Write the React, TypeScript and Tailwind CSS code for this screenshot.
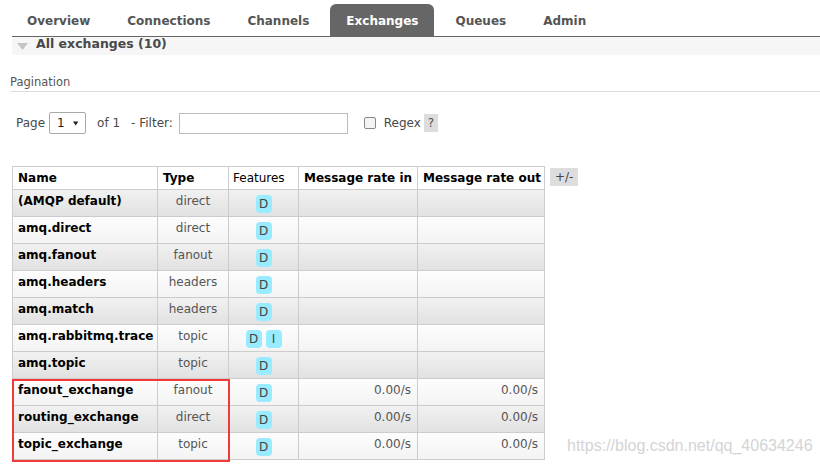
import React from 'react';

type Exchange = {
  name: string;
  type: string;
  features: string[];
  rateIn?: string;
  rateOut?: string;
};

const exchanges: Exchange[] = [
  { name: '(AMQP default)', type: 'direct', features: ['D'] },
  { name: 'amq.direct', type: 'direct', features: ['D'] },
  { name: 'amq.fanout', type: 'fanout', features: ['D'] },
  { name: 'amq.headers', type: 'headers', features: ['D'] },
  { name: 'amq.match', type: 'headers', features: ['D'] },
  { name: 'amq.rabbitmq.trace', type: 'topic', features: ['D', 'I'] },
  { name: 'amq.topic', type: 'topic', features: ['D'] },
  { name: 'fanout_exchange', type: 'fanout', features: ['D'], rateIn: '0.00/s', rateOut: '0.00/s' },
  { name: 'routing_exchange', type: 'direct', features: ['D'], rateIn: '0.00/s', rateOut: '0.00/s' },
  { name: 'topic_exchange', type: 'topic', features: ['D'], rateIn: '0.00/s', rateOut: '0.00/s' },
];

const tabs = ['Overview', 'Connections', 'Channels', 'Exchanges', 'Queues', 'Admin'];

const App: React.FC = () => {
  return (
    <div className="relative w-[820px] h-[469px] overflow-hidden bg-white text-[12px] text-[#484848] font-['DejaVu_Sans',Verdana,sans-serif]">
      {/* tabs */}
      <div className="ml-[12px] mt-[5px] h-[32px] flex items-end gap-[5px] border-b border-[#666]">
        {tabs.map((t, i) => (
          <div
            key={t}
            className={`h-[32px] px-[16px] pt-[1px] flex items-center font-bold text-[12px] rounded-t-[6px] ${
              i === 0 ? '-ml-[1px]' : ''
            } ${t === 'Exchanges' ? 'bg-[#666] text-white' : 'text-[#555]'}`}
          >
            {t}
          </div>
        ))}
      </div>

      {/* section header */}
      <div className="ml-[12px] h-[18px] bg-[#f6f6f6] flex items-center">
        <svg width="11" height="7" viewBox="0 0 11 7" className="ml-[5px] mt-[1px]">
          <path d="M0 0 H11 L5.5 7 Z" fill="#c4c4c4" />
        </svg>
        <span className="ml-[8px] font-bold text-[12.5px] text-[#484848] -mt-[4px]">All exchanges (10)</span>
      </div>

      {/* pagination */}
      <div className="ml-[10px] mt-[19px] pb-0 border-b border-[#ddd] text-[11.5px] text-[#555]">Pagination</div>

      <div className="ml-[16px] mt-[20px] flex items-center text-[12px] text-[#484848]">
        <span>Page</span>
        <div className="ml-[4px] w-[37px] h-[22px] border border-[#a9a9a9] rounded-[2px] flex items-center px-[7px] text-[#222]">
          <span>1</span>
          <svg width="7" height="5" viewBox="0 0 7 5" className="ml-[8px]">
            <path d="M0 0 H7 L3.5 5 Z" fill="#222" />
          </svg>
        </div>
        <span className="ml-[11px]">of 1</span>
        <span className="ml-[11px]">- Filter:</span>
        <div className="ml-[6px] w-[169px] h-[21px] border border-[#bbb]" />
        <div className="ml-[16px] w-[12px] h-[12px] border border-[#888] rounded-[2px] bg-[#f4f4f4]" />
        <span className="ml-[8px]">Regex</span>
        <span className="ml-[3px] px-[4px] h-[18px] flex items-center bg-[#ddd] text-[#555]">?</span>
      </div>

      {/* table */}
      <div className="ml-[12px] mt-[32px] flex items-start">
        <div className="relative">
          <table className="border-collapse text-[12px]">
            <thead>
              <tr className="h-[23px] bg-white">
                <th className="w-[145px] border border-[#ccc] text-left pl-[5px] font-bold text-black">Name</th>
                <th className="w-[71px] border border-[#ccc] text-left pl-[5px] font-bold text-black">Type</th>
                <th className="w-[70px] border border-[#ccc] text-left pl-[4px] font-normal text-black">Features</th>
                <th className="w-[119px] border border-[#ccc] text-left pl-[5px] font-bold text-black">Message rate in</th>
                <th className="w-[127px] border border-[#ccc] text-left pl-[5px] font-bold text-black">Message rate out</th>
              </tr>
            </thead>
            <tbody>
              {exchanges.map((e, i) => (
                <tr
                  key={e.name}
                  className={`h-[27px] ${
                    i % 2 === 0
                      ? 'bg-gradient-to-b from-[#f1f1f1] to-[#e1e1e1]'
                      : 'bg-gradient-to-b from-[#fdfdfd] to-[#f3f3f3]'
                  }`}
                >
                  <td className="border border-[#ccc] pl-[5px] pb-[4px] font-bold text-black">{e.name}</td>
                  <td className="border border-[#ccc] text-center pb-[4px] text-[#555]">{e.type}</td>
                  <td className="border border-[#ccc] text-center pt-[1px]">
                    <div className="flex justify-center gap-[4px]">
                      {e.features.map((f) => (
                        <span
                          key={f}
                          className="w-[16px] h-[18px] rounded-[4px] bg-[#99ebff] text-[#444] flex items-center justify-center text-[12px]"
                        >
                          {f}
                        </span>
                      ))}
                    </div>
                  </td>
                  <td className="border border-[#ccc] text-right pr-[6px] pb-[4px] text-[#555]">{e.rateIn ?? ''}</td>
                  <td className="border border-[#ccc] text-right pr-[6px] pb-[4px] text-[#555]">{e.rateOut ?? ''}</td>
                </tr>
              ))}
            </tbody>
          </table>
          {/* highlight box */}
          <div className="absolute left-[0px] top-[213px] w-[218px] h-[83px] border-[2.5px] border-[#f03a3a]" />
        </div>
        <div className="ml-[5px] mt-[2px] h-[18px] px-[5px] bg-[#ddd] text-[#444] flex items-center">+/-</div>
      </div>

      {/* watermark */}
      <div className="absolute left-[567px] top-[434px] text-[16px] text-[#d4d4d4] font-['Liberation_Sans',Arial,sans-serif]">
        https://blog.csdn.net/qq_40634246
      </div>
    </div>
  );
};

export default App;
